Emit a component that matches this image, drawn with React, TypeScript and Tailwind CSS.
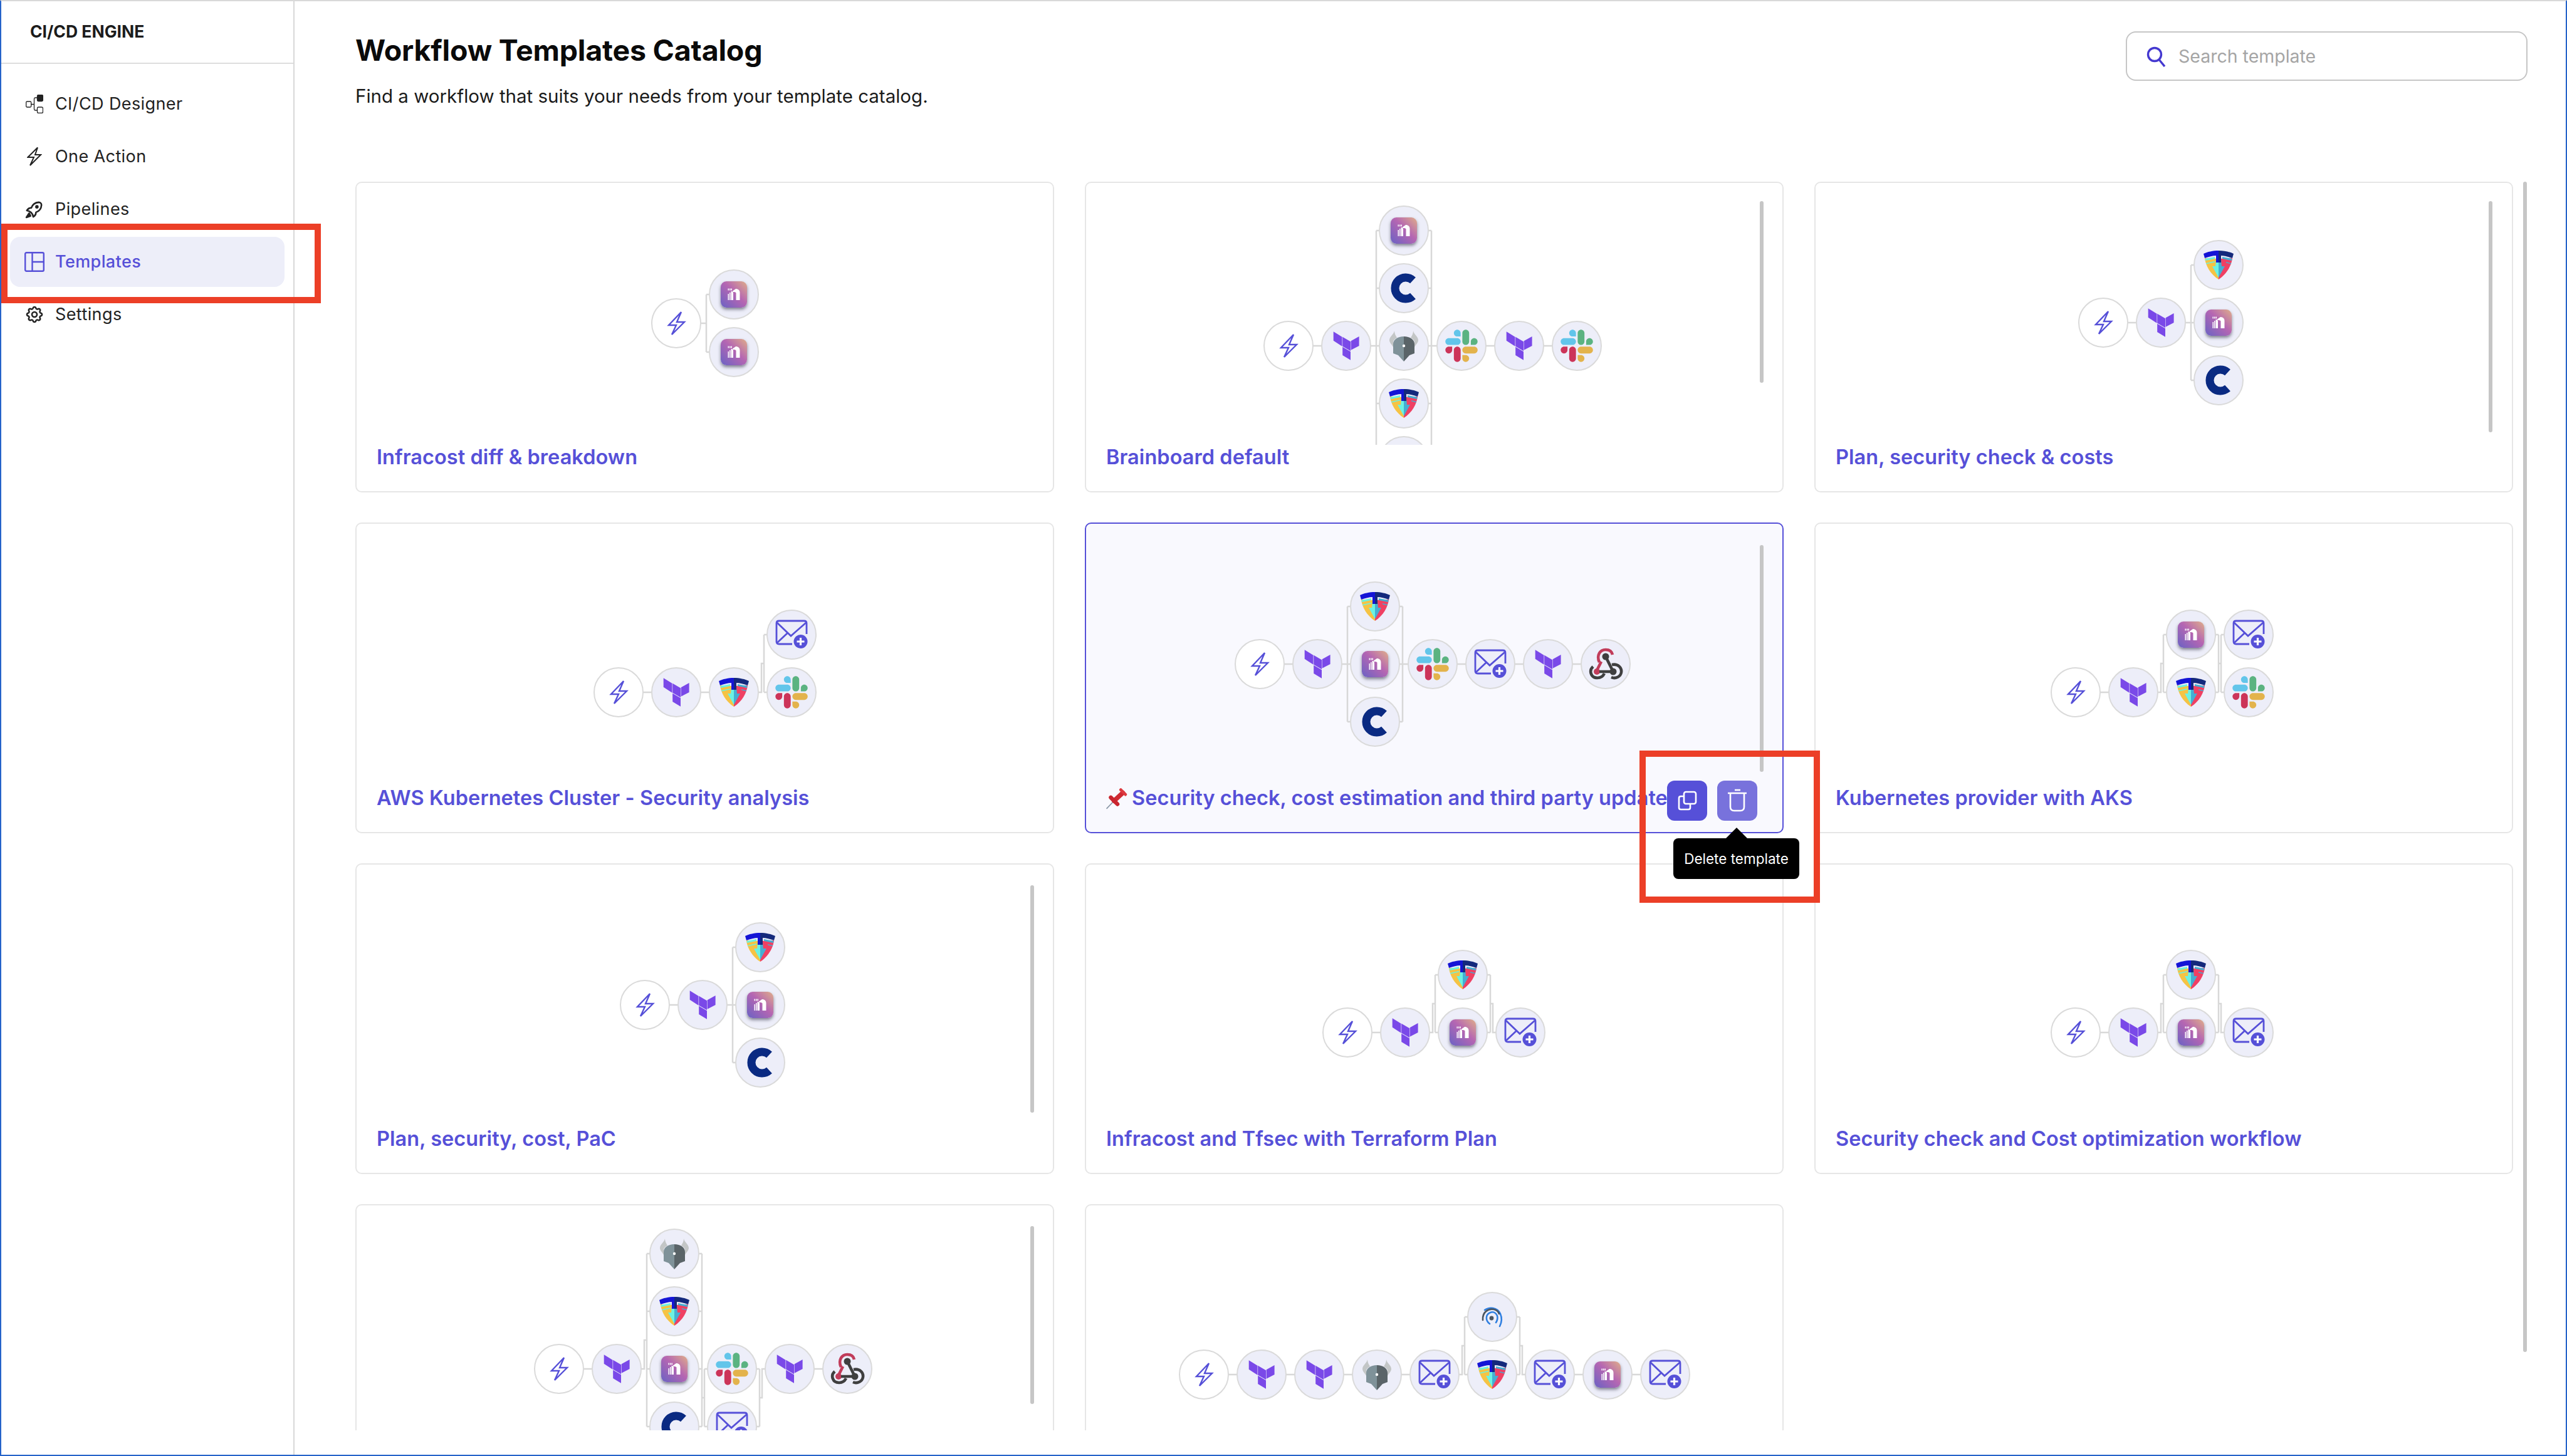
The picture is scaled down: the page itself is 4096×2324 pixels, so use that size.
import { ReactNode } from 'react'

type IconName =
  | 'bolt'
  | 'terraform'
  | 'infracost'
  | 'tfsec'
  | 'checkov'
  | 'slack'
  | 'email'
  | 'webhook'
  | 'opa'
  | 'radar'

type Column = { icon: IconName; row: number }[]

interface Template {
  title?: string
  x: number
  y: number
  cols: Column[]
  scroll?: [number, number, number]
  active?: boolean
}

const one = (icon: IconName): Column => [{ icon, row: 0 }]
const PITCH = 92
const BRAND = '#5650d8'
const LINE = '#d8d8d8'

// x, y: centre of the first node, relative to the card's inner box
const templates: Template[] = [
  {
    title: 'Infracost diff & breakdown',
    x: 510,
    y: 224,
    cols: [one('bolt'), [{ icon: 'infracost', row: -0.5 }, { icon: 'infracost', row: 0.5 }]],
  },
  {
    title: 'Brainboard default',
    x: 323,
    y: 260,
    scroll: [1075, 29, 290],
    cols: [
      one('bolt'),
      one('terraform'),
      [
        { icon: 'infracost', row: -2 },
        { icon: 'checkov', row: -1 },
        { icon: 'opa', row: 0 },
        { icon: 'tfsec', row: 1 },
        { icon: 'email', row: 2 },
      ],
      one('slack'),
      one('terraform'),
      one('slack'),
    ],
  },
  {
    title: 'Plan, security check & costs',
    x: 459,
    y: 223,
    scroll: [1074, 29, 369],
    cols: [
      one('bolt'),
      one('terraform'),
      [
        { icon: 'tfsec', row: -1 },
        { icon: 'infracost', row: 0 },
        { icon: 'checkov', row: 1 },
      ],
    ],
  },
  {
    title: 'AWS Kubernetes Cluster - Security analysis',
    x: 418,
    y: 269,
    cols: [
      one('bolt'),
      one('terraform'),
      one('tfsec'),
      [{ icon: 'email', row: -1 }, { icon: 'slack', row: 0 }],
    ],
  },
  {
    title: 'Security check, cost estimation and third party update',
    x: 277,
    y: 224,
    active: true,
    scroll: [1075, 34, 362],
    cols: [
      one('bolt'),
      one('terraform'),
      [
        { icon: 'tfsec', row: -1 },
        { icon: 'infracost', row: 0 },
        { icon: 'checkov', row: 1 },
      ],
      one('slack'),
      one('email'),
      one('terraform'),
      one('webhook'),
    ],
  },
  {
    title: 'Kubernetes provider with AKS',
    x: 415,
    y: 269,
    cols: [
      one('bolt'),
      one('terraform'),
      [{ icon: 'infracost', row: -1 }, { icon: 'tfsec', row: 0 }],
      [{ icon: 'email', row: -1 }, { icon: 'slack', row: 0 }],
    ],
  },
  {
    title: 'Plan, security, cost, PaC',
    x: 460,
    y: 224,
    scroll: [1075, 33, 363],
    cols: [
      one('bolt'),
      one('terraform'),
      [
        { icon: 'tfsec', row: -1 },
        { icon: 'infracost', row: 0 },
        { icon: 'checkov', row: 1 },
      ],
    ],
  },
  {
    title: 'Infracost and Tfsec with Terraform Plan',
    x: 417,
    y: 268,
    cols: [
      one('bolt'),
      one('terraform'),
      [{ icon: 'tfsec', row: -1 }, { icon: 'infracost', row: 0 }],
      one('email'),
    ],
  },
  {
    title: 'Security check and Cost optimization workflow',
    x: 415,
    y: 268,
    cols: [
      one('bolt'),
      one('terraform'),
      [{ icon: 'tfsec', row: -1 }, { icon: 'infracost', row: 0 }],
      one('email'),
    ],
  },
  // the last row is cut by the scroll area before its titles
  {
    x: 323,
    y: 261,
    scroll: [1075, 33, 284],
    cols: [
      one('bolt'),
      one('terraform'),
      [
        { icon: 'opa', row: -2 },
        { icon: 'tfsec', row: -1 },
        { icon: 'infracost', row: 0 },
        { icon: 'checkov', row: 1 },
      ],
      [{ icon: 'slack', row: 0 }, { icon: 'email', row: 1 }],
      one('terraform'),
      one('webhook'),
    ],
  },
  {
    x: 188,
    y: 270,
    cols: [
      one('bolt'),
      one('terraform'),
      one('terraform'),
      one('opa'),
      one('email'),
      [{ icon: 'radar', row: -1 }, { icon: 'tfsec', row: 0 }],
      one('email'),
      one('infracost'),
      one('email'),
    ],
  },
]

function NodeIcon({ name }: { name: IconName }) {
  const box = '-28 -28 56 56'
  if (name === 'bolt')
    return (
      <svg width="56" height="56" viewBox={box} fill="none" stroke={BRAND} strokeWidth="2.4" strokeLinejoin="miter">
        <path d="M8 -18 L-12 3 L0 3 L-7 18 L13 -2 L1 -2 Z" />
      </svg>
    )
  if (name === 'terraform')
    return (
      <svg width="56" height="56" viewBox={box} fill="#7a49e8">
        <path d="M-20.3 -22.7 L-6.5 -14.3 V0.7 L-20.3 -8.3 Z" />
        <path d="M-5.8 -14.3 L7 -6.7 V8.3 L-5.8 0.7 Z" />
        <path d="M7.6 -7.7 L20.6 -15 V0 L7.6 6.7 Z" />
        <path d="M-5.8 1.7 L7 9.3 V22.7 L-5.8 15 Z" />
      </svg>
    )
  if (name === 'infracost')
    return (
      <div className="flex h-[42px] w-[42px] items-center justify-center rounded-[9px] bg-[linear-gradient(45deg,#6a62c4_0%,#b566b2_55%,#dfae8a_100%)] shadow-[0_3px_5px_rgba(40,40,60,0.55)]">
        <svg width="28" height="28" viewBox="-14 -14 28 28" fill="#ffffff">
          <path d="M-2 -5.5 L3 -9 C7 -9 9.5 -6.5 9.5 -3 V9 H3.5 V-2 C3.5 -3.5 2 -4 -2 -4 Z" />
          <path d="M-9.5 -9.5 H-8 V-6.5 H-9.5 Z M-7 -9.5 H-5.5 V-6.5 H-7 Z M-4.5 -9.5 H-3 V-6.5 H-4.5 Z" />
          <path d="M-9.5 -1 H-8 V9 H-9.5 Z M-7 -3 H-5.5 V9 H-7 Z M-4.5 -5 H-3 L-1 -3 V9 H-4.5 Z" />
        </svg>
      </div>
    )
  if (name === 'tfsec')
    return (
      <svg width="56" height="56" viewBox={box}>
        <path d="M-22 -11 C-21 0 -13 15 0 23 V-10 Z" fill="#f5c344" />
        <path d="M22 -11 C21 0 13 15 0 23 V-10 Z" fill="#ef4063" />
        <path d="M-21.5 -10 L-6 -13 V-10 L-21 -7 Z M-20 -3 L-6 -6 V-4.5 L-19.5 -1.5 Z" fill="#6cf2e2" />
        <path d="M21.5 -10 L6 -13 V-10 L21 -7 Z M12 -5 L20 -3 V-1.5 L12 -3.5 Z" fill="#45aed2" />
        <path d="M-4 -8 H0 V20 L-10 2 H-5 Z" fill="#6cf2e2" />
        <path d="M4 -8 H0 V20 L10 2 H5 Z" fill="#45aed2" />
        <path d="M0 -23 C-9 -23 -18 -21 -24 -18 L-22 -11 C-16 -13 -9 -15 -4 -15 V-4 H0 Z" fill="#1414d6" />
        <path d="M0 -23 C9 -23 18 -21 24 -18 L22 -11 C16 -13 9 -15 4 -15 V-4 H0 Z" fill="#14297c" />
      </svg>
    )
  if (name === 'checkov')
    return (
      <svg width="56" height="56" viewBox={box} fill="none">
        <path d="M13 -12.5 A17 17 0 1 0 13 12.5" stroke="#0a2a82" strokeWidth="13" transform="translate(1.5 0)" />
      </svg>
    )
  if (name === 'slack')
    return (
      <svg width="52" height="52" viewBox="0 0 127 127">
        <path d="M27.2 80c0 7.3-5.9 13.2-13.2 13.2C6.7 93.2.8 87.3.8 80c0-7.3 5.9-13.2 13.2-13.2h13.2V80zm6.6 0c0-7.3 5.9-13.2 13.2-13.2 7.3 0 13.2 5.9 13.2 13.2v33c0 7.3-5.9 13.2-13.2 13.2-7.3 0-13.2-5.9-13.2-13.2V80z" fill="#cc3459" />
        <path d="M47 27c-7.3 0-13.2-5.9-13.2-13.2C33.8 6.5 39.7.6 47 .6c7.3 0 13.2 5.9 13.2 13.2V27H47zm0 6.7c7.3 0 13.2 5.9 13.2 13.2 0 7.3-5.9 13.2-13.2 13.2H13.9C6.6 60.1.7 54.2.7 46.9c0-7.3 5.9-13.2 13.2-13.2H47z" fill="#62c5ea" />
        <path d="M99.9 46.9c0-7.3 5.9-13.2 13.2-13.2 7.3 0 13.2 5.9 13.2 13.2 0 7.3-5.9 13.2-13.2 13.2H99.9V46.9zm-6.6 0c0 7.3-5.9 13.2-13.2 13.2-7.3 0-13.2-5.9-13.2-13.2V13.8C66.9 6.5 72.8.6 80.1.6c7.3 0 13.2 5.9 13.2 13.2v33.1z" fill="#5bb381" />
        <path d="M80.1 99.8c7.3 0 13.2 5.9 13.2 13.2 0 7.3-5.9 13.2-13.2 13.2-7.3 0-13.2-5.9-13.2-13.2V99.8h13.2zm0-6.6c-7.3 0-13.2-5.9-13.2-13.2 0-7.3 5.9-13.2 13.2-13.2h33.1c7.3 0 13.2 5.9 13.2 13.2 0 7.3-5.9 13.2-13.2 13.2H80.1z" fill="#e3b34c" />
      </svg>
    )
  if (name === 'email')
    return (
      <svg width="56" height="56" viewBox={box} fill="none" stroke={BRAND} strokeWidth="2.8">
        <path d="M1 15 H-20 Q-24 15 -24 11 V-18 Q-24 -22 -20 -22 H20 Q24 -22 24 -18 V-1" />
        <path d="M-23 -19 L-1 2 L23 -19 M-23 13 L-6 -3" />
        <circle cx="14.5" cy="11" r="11" fill={BRAND} stroke="none" />
        <path d="M14.5 5 V17 M8.5 11 H20.5" stroke="#ffffff" strokeWidth="3.2" />
      </svg>
    )
  if (name === 'webhook')
    return (
      <svg width="56" height="56" viewBox={box} fill="none" strokeWidth="4.6">
        <path d="M-10 -3 C-15 -14 -9 -23 0 -23 C6 -23 10 -20 11 -15" stroke="#c13c5a" />
        <path d="M-7 -4 L-14 10" stroke="#c13c5a" />
        <circle cx="-14" cy="12" r="5" fill="#c13c5a" stroke="none" />
        <path d="M0 -12 L12 12 H-10" stroke="#3f3f3f" />
        <circle cx="0" cy="-12" r="5.5" fill="#3f3f3f" stroke="none" />
        <circle cx="12" cy="12" r="5.5" fill="#3f3f3f" stroke="none" />
        <path d="M-20 4 C-27 10 -24 22 -13 22 C-8 22 -4 19 -2 15" stroke="#3f3f3f" />
        <path d="M10 1 C20 -1 26 6 25 13 C24 20 16 24 9 21" stroke="#3f3f3f" />
      </svg>
    )
  if (name === 'opa')
    return (
      <svg width="56" height="56" viewBox={box}>
        <path d="M-15 -24 C-16 -18 -23 -15 -23 -9 C-23 -5 -19 -2 -17 2 V-6 C-17 -9 -14 -11 -11 -13 C-13 -16 -15 -20 -15 -24 Z" fill="#c3c6c6" />
        <path d="M15 -24 C16 -18 23 -15 23 -9 C23 -5 19 -2 17 2 V-6 C17 -9 14 -11 11 -13 C13 -16 15 -20 15 -24 Z" fill="#c3c6c6" />
        <path d="M0 -15 C-10 -15 -17 -10 -17 -3 V12 L-9 15 L0 25 Z" fill="#7f9299" />
        <path d="M0 -15 C10 -15 17 -10 17 -3 V12 L9 15 L0 25 Z" fill="#5a6468" />
        <circle cx="0" cy="0" r="2.2" fill="#ffffff" />
      </svg>
    )
  return (
    <svg width="56" height="56" viewBox={box} fill="none" strokeWidth="2.6" strokeLinecap="round">
      <path d="M-12 -11 C-5 -16 8 -16 13 -5 C16 2 15 9 12 15" stroke="#2f7fe0" />
      <path d="M-15 5 C-16 -8 -6 -14 3 -12 C7 -11 10 -8 11 -5" stroke="#4a5560" />
      <path d="M-4 11 C-11 6 -11 -4 -3 -7 C2 -9 6 -6 8 -2 M8 -2 C9 2 8 6 6 9" stroke="#2f7fe0" />
      <circle cx="-1" cy="2" r="3.4" fill="#4a5560" stroke="none" />
    </svg>
  )
}

// Brackets around forked columns plus the elbows joining them to their neighbours
function connectorPaths(t: Template) {
  const d: string[] = []
  t.cols.forEach((col, i) => {
    const cx = t.x + i * PITCH
    const rows = col.map((n) => t.y + n.row * PITCH)
    const top = Math.min(...rows)
    const bottom = Math.max(...rows)
    const mid = (top + bottom) / 2
    const gapL = cx - 46
    const gapR = cx + 46
    const next = t.cols[i + 1]
    if (col.length > 1) {
      d.push(`M${gapL + 2} ${top}V${bottom}`)
      rows.forEach((y) => d.push(`M${gapL + 2} ${y}H${cx}`))
      if (next) {
        d.push(`M${gapR - 2} ${top}V${bottom}`)
        rows.forEach((y) => d.push(`M${gapR - 2} ${y}H${cx}`))
      }
    }
    if (next) {
      const nr = next.map((n) => t.y + n.row * PITCH)
      const nmid = (Math.min(...nr) + Math.max(...nr)) / 2
      const from = col.length > 1 ? gapR - 2 : cx
      const to = next.length > 1 ? gapR + 2 : cx + PITCH
      if (nmid === mid) d.push(`M${from} ${mid}H${to}`)
      else d.push(`M${from} ${mid}H${col.length > 1 && next.length === 1 ? gapR + 2 : gapR - 2}V${nmid}H${to}`)
    }
  })
  return d.join('')
}

function Diagram({ t }: { t: Template }) {
  return (
    <div className="relative h-[418px] w-full overflow-hidden">
      <svg className="absolute left-0 top-0" width="1112" height="418" fill="none" stroke={LINE} strokeWidth="2.5">
        <path d={connectorPaths(t)} />
      </svg>
      {t.cols.map((col, i) =>
        col.map((n) => (
          <div
            key={`${i}-${n.row}`}
            className={`absolute flex h-[80px] w-[80px] items-center justify-center rounded-full border-2 border-[#dadada] ${
              n.icon === 'bolt' ? 'bg-white' : 'bg-[#edeef9]'
            }`}
            style={{ left: t.x + i * PITCH - 40, top: t.y + n.row * PITCH - 40 }}
          >
            <NodeIcon name={n.icon} />
          </div>
        )),
      )}
      {t.scroll && (
        <div
          className="absolute w-[6px] rounded-full bg-[#c6c6c6]"
          style={{ left: t.scroll[0], top: t.scroll[1], height: t.scroll[2] }}
        />
      )}
    </div>
  )
}

function PinIcon() {
  return (
    <svg width="34" height="34" viewBox="0 0 32 32" className="mr-[7px] shrink-0" fill="none" strokeLinecap="round">
      <path d="M1 30.5 L11 20" stroke="#8a97a6" strokeWidth="1.6" />
      <path d="M12 19 L25 7" stroke="#cf2a33" strokeWidth="7" />
      <path d="M7 14 L17 24" stroke="#c9252f" strokeWidth="6" />
      <path d="M22 2.5 L29 9.5" stroke="#dd3a3f" strokeWidth="4.5" />
    </svg>
  )
}

function TemplateCard({ t }: { t: Template }) {
  return (
    <div
      className={`relative h-[496px] rounded-[10px] border-2 ${
        t.active ? 'border-[#5650d8] bg-[#f9f9fe]' : 'border-[#e6e6e6] bg-white'
      }`}
    >
      <Diagram t={t} />
      {t.title && (
        <div className="flex h-[41px] items-center overflow-hidden whitespace-nowrap pl-[32px] text-[32.5px] font-semibold tracking-[0.05px] text-[#5650d8]">
          {t.active && <PinIcon />}
          {t.title}
        </div>
      )}
      {t.active && (
        <>
          <div className="absolute left-[927px] top-[410px] flex gap-[16px]">
            <div className="flex h-[64px] w-[64px] items-center justify-center rounded-[12px] bg-[#5650d8]">
              <svg width="36" height="36" viewBox="0 0 36 36" fill="none" stroke="#ffffff" strokeWidth="2.6">
                <rect x="13" y="4" width="19" height="19" rx="3" />
                <path d="M13 11 H8 Q5 11 5 14 V29 Q5 32 8 32 H20 Q23 32 23 29 V24" />
              </svg>
            </div>
            <div className="flex h-[64px] w-[64px] items-center justify-center rounded-[12px] bg-[#7872dc]">
              <svg width="36" height="40" viewBox="0 0 36 40" fill="none" stroke="#ffffff" strokeWidth="2.6">
                <path d="M14 3 H23 M3 8 H33 M7 8 V30 Q7 36 13 36 H23 Q29 36 29 30 V8" />
              </svg>
            </div>
          </div>
          <div className="absolute left-[937px] top-[502px] z-10 flex h-[65px] w-[201px] items-center justify-center rounded-[8px] bg-black text-[22.5px] text-white">
            <span className="absolute left-[89px] top-[-12px] h-[24px] w-[24px] rotate-45 bg-black" />
            <span className="relative">Delete template</span>
          </div>
        </>
      )}
    </div>
  )
}

function NavItem({ icon, label, active }: { icon: ReactNode; label: string; active?: boolean }) {
  return (
    <div
      className={`mx-[14px] flex h-[80px] items-center rounded-[16px] pl-[21px] text-[27px] tracking-[0.4px] ${
        active ? 'bg-[#edeef9] text-[#5650d8]' : 'text-[#222222]'
      }`}
    >
      <div className="mr-[16px] flex w-[35px] items-center justify-center">{icon}</div>
      <span className={active ? 'font-medium' : ''}>{label}</span>
    </div>
  )
}

const sideIcon = { fill: 'none', stroke: 'currentColor', strokeWidth: 2, strokeLinecap: 'round', strokeLinejoin: 'round' } as const

export default function App() {
  return (
    <div className="relative flex h-[2324px] w-[4096px] overflow-hidden border-x-2 border-b-2 border-t-2 border-x-[#2563c9] border-b-[#2563c9] border-t-[#d9d9d9] bg-white font-['Inter',sans-serif]">
      <aside className="h-full w-[468px] shrink-0 border-r-2 border-[#d8d8d8]">
        <div className="flex h-[100px] items-center border-b-2 border-[#dedede] pl-[46px] text-[26.5px] font-bold text-[#1c1c1c]">
          CI/CD ENGINE
        </div>
        <nav className="flex flex-col gap-[4px] pt-[24px]">
          <NavItem
            label="CI/CD Designer"
            icon={
              <svg width="28" height="30" viewBox="0 0 28 30" fill="none" stroke="currentColor" strokeWidth="1.3">
                <rect x="0.7" y="11" width="8" height="9" rx="1.5" />
                <rect x="18.5" y="0.5" width="9" height="10" rx="2" fill="currentColor" />
                <rect x="18.5" y="20" width="9" height="9.5" rx="2" />
                <path d="M9 15.5 H13.5 M18 5 H15 Q13.5 5 13.5 7 V23 Q13.5 25 15 25 H18" />
              </svg>
            }
          />
          <NavItem
            label="One Action"
            icon={
              <svg width="24" height="32" viewBox="0 0 24 32" {...sideIcon} strokeLinejoin="miter" strokeLinecap="butt">
                <path d="M17 1.5 L1.5 17 H11 L5 30 L22 13 H13 Z" />
              </svg>
            }
          />
          <NavItem
            label="Pipelines"
            icon={
              <svg width="37" height="37" viewBox="0 0 24 24" {...sideIcon} strokeWidth={1.8}>
                <path d="M4 13a8 8 0 0 1 7 7a6 6 0 0 0 3 -5a9 9 0 0 0 6 -8a3 3 0 0 0 -3 -3a9 9 0 0 0 -8 6a6 6 0 0 0 -5 3" />
                <path d="M6.5 16 L3.5 20.5 L8 19 Z" fill="currentColor" />
                <circle cx="15" cy="9" r="1" />
              </svg>
            }
          />
          <NavItem
            active
            label="Templates"
            icon={
              <svg width="32" height="32" viewBox="0 0 32 32" fill="none" stroke="currentColor" strokeWidth="2.4">
                <rect x="1.2" y="1.2" width="29.6" height="29.6" rx="2" />
                <path d="M12.5 1.2 V30.8 M12.5 16 H30.8" />
              </svg>
            }
          />
          <NavItem
            label="Settings"
            icon={
              <svg width="32" height="32" viewBox="0 0 24 24" {...sideIcon} strokeWidth={1.9}>
                <path d="M10.325 4.317c.426 -1.756 2.924 -1.756 3.35 0a1.724 1.724 0 0 0 2.573 1.066c1.543 -.94 3.31 .826 2.37 2.37a1.724 1.724 0 0 0 1.065 2.572c1.756 .426 1.756 2.924 0 3.35a1.724 1.724 0 0 0 -1.066 2.573c.94 1.543 -.826 3.31 -2.37 2.37a1.724 1.724 0 0 0 -2.572 1.065c-.426 1.756 -2.924 1.756 -3.35 0a1.724 1.724 0 0 0 -2.573 -1.066c-1.543 .94 -3.31 -.826 -2.37 -2.37a1.724 1.724 0 0 0 -1.065 -2.572c-1.756 -.426 -1.756 -2.924 0 -3.35a1.724 1.724 0 0 0 1.066 -2.573c-.94 -1.543 .826 -3.31 2.37 -2.37c1 .608 2.296 .07 2.572 -1.065z" />
                <circle cx="12" cy="12" r="3" />
              </svg>
            }
          />
        </nav>
      </aside>

      <main className="flex min-w-0 flex-1 flex-col pl-[97px]">
        <header className="flex h-[288px] shrink-0 items-start justify-between pr-[61px]">
          <div>
            <h1 className="mt-[50px] text-[46.5px] font-bold leading-[56px] tracking-[-0.2px] text-[#0a0a0a]">Workflow Templates Catalog</h1>
            <p className="mt-[27px] text-[29.5px] leading-[36px] text-[#1a1a1a]">
              Find a workflow that suits your needs from your template catalog.
            </p>
          </div>
          <div className="mt-[48px] flex h-[79px] w-[641px] shrink-0 items-center rounded-[16px] border-2 border-[#c6c6c6] pl-[30px] pt-[1px] text-[28.5px] text-[#a5a5a5]">
            <svg width="34" height="34" viewBox="0 0 34 34" fill="none" stroke="#4438d0" strokeWidth="3.4" className="mr-[18px]">
              <circle cx="14" cy="14" r="10.5" />
              <path d="M21 22 L30 33" />
            </svg>
            Search template
          </div>
        </header>

        <div className="relative h-[1993px] shrink-0 overflow-hidden">
          <div className="grid w-[3443px] grid-cols-3 gap-x-[49px] gap-y-[48px]">
            {templates.map((t, i) => (
              <TemplateCard key={i} t={t} />
            ))}
          </div>
          <div className="absolute left-[3459px] top-0 h-[1868px] w-[6px] rounded-full bg-[#c6c6c6]" />
        </div>
      </main>

      {/* annotations on top of the screenshot */}
      <div className="pointer-events-none absolute left-0 top-[355px] h-[127px] w-[510px] border-[10px] border-[#ec3f27]" />
      <div className="pointer-events-none absolute left-[2614px] top-[1196px] h-[243px] w-[288px] border-[10px] border-[#ec3f27]" />
    </div>
  )
}
